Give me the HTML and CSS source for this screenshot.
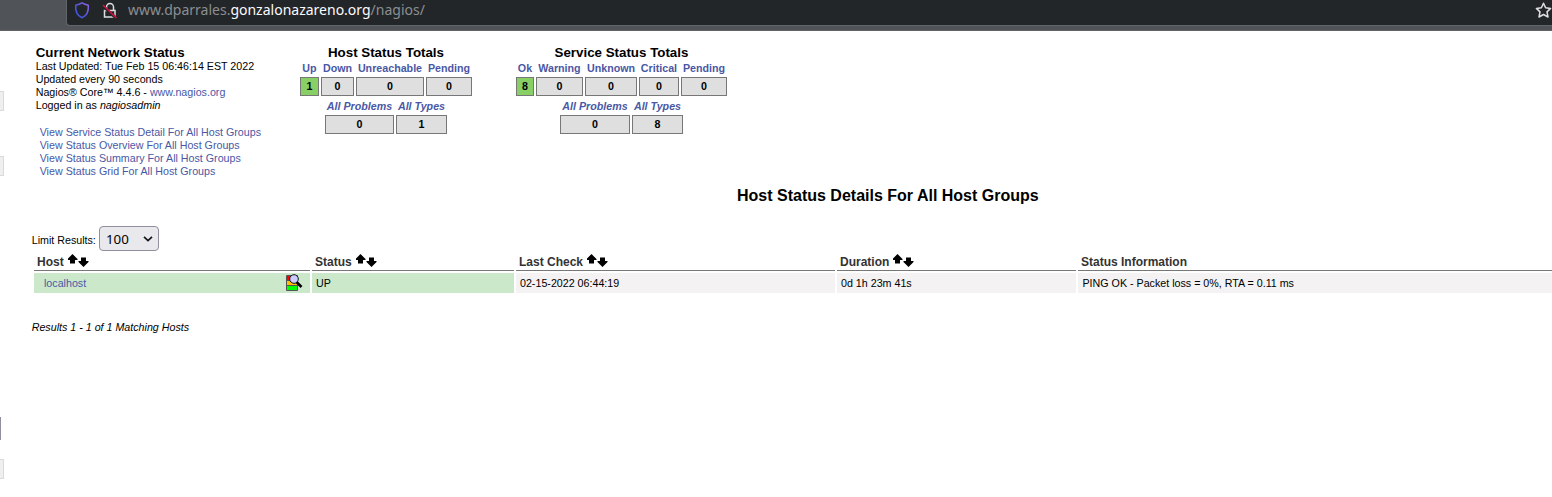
FILE: index.html
```html
<!DOCTYPE html>
<html lang="en">
<head>
<meta charset="utf-8">
<title>Nagios Core</title>
<link rel="stylesheet" href="styles.css">
</head>
<body>
<svg class="defs" width="0" height="0" aria-hidden="true">
  <defs>
    <linearGradient id="shield-stroke" x1="0" y1="1" x2="1" y2="0"><stop offset="0" stop-color="#2f55e0"/><stop offset=".5" stop-color="#5558dc"/><stop offset="1" stop-color="#9565e5"/></linearGradient>
    <symbol id="sort" viewBox="0 0 21 13"><path d="M4.500 0 L9.500 5 V6 H7 V9.500 H2 V6 H-.500 V5 Z M13 3.500 H18 V7 H20.500 V8 L15.500 13 L10.500 8 V7 H13 Z"/></symbol>
  </defs>
</svg>
<header class="toolbar">
  <div class="urlbar">
    <svg class="shield" width="16" height="18" viewBox="0 0 16 18"><path d="M8 1.800 C6 3 3.500 3.800 1.700 4.200 C1.200 10 3 14.500 8 16.800 C13 14.500 14.800 10 14.300 4.200 C12.500 3.800 10 3 8 1.800 Z" fill="none" stroke="url(#shield-stroke)" stroke-width="1.500" stroke-linejoin="round"/></svg>
    <svg class="lock" width="16" height="18" viewBox="0 0 16 18"><path d="M4.500 9 V6 A3.500 3.500 0 0 1 11.500 6 V9 M2.500 9.500 H13 V16 H2.500 Z" fill="none" stroke="#dedee0" stroke-width="1.500"/><path d="M1.500 5.500 L14.500 17.500" stroke="#23262a" stroke-width="3"/><path d="M1 4 L14.500 17" stroke="#d9123f" stroke-width="1.500"/></svg>
    <span class="url">www.dparrales.<b>gonzalonazareno.org</b>/nagios/</span>
    <svg class="star" width="17" height="17" viewBox="0 0 17 17"><path d="M8.500 1.200 L10.600 5.800 L15.600 6.400 L12 9.900 L13 15 L8.500 12.500 L4 15 L5 9.900 L1.400 6.400 L6.400 5.800 Z" fill="none" stroke="#dfdfe1" stroke-width="1.500" stroke-linejoin="round"/></svg>
  </div>
</header>
<div class="page">
  <aside class="rail"><i class="stub s1"></i><i class="stub s2"></i><i class="field"></i><i class="stub s3"></i></aside>
  <main>
    <div class="summary">
      <section class="info">
        <h2>Current Network Status</h2>
        <p>Last Updated: Tue Feb 15 06:46:14 EST 2022</p>
        <p>Updated every 90 seconds</p>
        <p>Nagios® Core™ 4.4.6 - <a>www.nagios.org</a></p>
        <p>Logged in as <em>nagiosadmin</em></p>
        <nav>
          <a>View Service Status Detail For All Host Groups</a>
          <a>View Status Overview For All Host Groups</a>
          <a>View Status Summary For All Host Groups</a>
          <a>View Status Grid For All Host Groups</a>
        </nav>
      </section>
      <section class="totals hosts">
        <h2>Host Status Totals</h2>
        <div class="counts">
          <span>Up</span><span>Down</span><span>Unreachable</span><span>Pending</span>
          <b class="ok">1</b><b>0</b><b>0</b><b>0</b>
        </div>
        <div class="counts all">
          <span>All Problems</span><span>All Types</span>
          <b>0</b><b>1</b>
        </div>
      </section>
      <section class="totals services">
        <h2>Service Status Totals</h2>
        <div class="counts">
          <span>Ok</span><span>Warning</span><span>Unknown</span><span>Critical</span><span>Pending</span>
          <b class="ok">8</b><b>0</b><b>0</b><b>0</b><b>0</b>
        </div>
        <div class="counts all">
          <span>All Problems</span><span>All Types</span>
          <b>0</b><b>8</b>
        </div>
      </section>
    </div>
    <h1>Host Status Details For All Host Groups</h1>
    <div class="limit"><span>Limit Results:</span>
      <div class="select"><span>100</span><svg width="10" height="6" viewBox="0 0 10 6"><path d="M1 .8 L5 4.600 L9 .8" fill="none" stroke="#15141a" stroke-width="1.700"/></svg></div>
    </div>
    <div class="grid heads">
      <div>Host<svg class="sort"><use href="#sort"/></svg></div>
      <div>Status<svg class="sort"><use href="#sort"/></svg></div>
      <div>Last Check<svg class="sort"><use href="#sort"/></svg></div>
      <div>Duration<svg class="sort"><use href="#sort"/></svg></div>
      <div>Status Information</div>
    </div>
    <div class="grid row">
      <div class="up host"><a>localhost</a>
        <svg width="17" height="17" viewBox="0 0 17 17"><path d="M.5 1.500 H11.500 V16.500 H.5 Z" fill="#ffc000" stroke="#555"/><path d="M1 2 H5 V6 H1 Z" fill="#f00"/><path d="M1 12 H11 V16 H1 Z" fill="#0f0"/><path d="M1 6.500 H5 M1 11.500 H11" stroke="#555"/><path d="M10.500 8 L15.500 13" stroke="#000" stroke-width="2.600"/><circle cx="8" cy="5" r="4.300" fill="#ccf" stroke="#111"/></svg>
      </div>
      <div class="up">UP</div>
      <div>02-15-2022 06:44:19</div>
      <div>0d 1h 23m 41s</div>
      <div class="output">PING OK - Packet loss = 0%, RTA = 0.11 ms</div>
    </div>
    <p class="results">Results 1 - 1 of 1 Matching Hosts</p>
  </main>
</div>
</body>
</html>
```
FILE: styles.css
```css
* { box-sizing: border-box; }
body { margin: 0; height: 497px; overflow: hidden; background: #fff; color: #000; font: 10.7px/13px "Liberation Sans", Arial, sans-serif; }
h1, h2, p { margin: 0; }
a { color: #4958a5; }
.defs { display: block; height: 0; }
.toolbar { height: 31px; padding-left: 66px; background: #505357; border-bottom: 1px solid #606367; }
.urlbar { display: flex; align-items: flex-start; height: 26px; padding-left: 7px; background: #232629; border: solid #62656a; border-width: 0 0 1px 1px; border-radius: 0 0 0 4px; }
.shield { margin-top: 1px; }
.lock { margin: 1px 0 0 12px; }
.url { margin: 0 auto 0 10px; font: 14px/20px "Noto Sans", sans-serif; color: #8b8e91; white-space: nowrap; }
.url b { font-weight: 400; color: #fbfbfe; }
.star { margin: 2px 0 0; flex: none; }
.page { display: flex; height: 466px; }
.rail { width: 4px; flex: none; display: flex; flex-direction: column; }
.stub { height: 20px; background: #efefef; border: 1px solid #dadada; border-left: 0; }
.s1 { margin-top: 60px; }
.s2 { margin-top: 45px; }
.field { width: 1px; height: 23px; margin-top: 241px; background: #8f8f9d; }
.s3 { margin-top: 19px; }
main { flex: 1; min-width: 0; padding: 14px 0 0 27.7px; }
.summary { display: flex; height: 135px; }
h2 { font-size: 13.333px; line-height: 15px; }
.info { width: 268.3px; padding-left: 4px; white-space: nowrap; }
nav { display: flex; flex-direction: column; padding: 14px 0 0 4px; }
.totals { text-align: center; }
.hosts { width: 172px; margin-right: 44px; }
.services { width: 211px; }
.counts { display: grid; grid-template-rows: 17px 19px; column-gap: 2px; justify-content: center; font-weight: 700; }
.hosts .counts { grid-template-columns: 19px 33px 68px 46px; }
.services .counts { grid-template-columns: 18px 47px 52px 40px 46px; }
.hosts .all, .services .all { grid-template-rows: 19px 19px; grid-template-columns: 69px 51px; }
.services .all { grid-template-columns: 70px 51px; }
.counts span { color: #4958a5; line-height: 17px; white-space: nowrap; display: flex; justify-content: center; }
.all span { font-style: italic; line-height: 20px; }
.counts b { border: 1px solid #777; background: #dfdfdf; line-height: 17px; }
.counts .ok { background: #88d066; }
h1 { padding-left: 192px; text-align: center; font-size: 16px; line-height: 18px; margin: 7px 0 0; }
.limit { display: flex; align-items: flex-start; height: 26px; margin-top: 20px; }
.limit > span { padding-top: 9px; width: 67.3px; }
.select { display: flex; align-items: center; justify-content: space-between; width: 60px; height: 25px; margin-top: 1px; padding: 0 5px 0 6px; border: 1px solid #8f8f9d; border-radius: 4px; background: #e9e9ed; font: 13.333px/20px "Noto Sans", sans-serif; }
.grid { display: grid; grid-template-columns: 276px 202px 319px 239px 1fr; column-gap: 2px; margin-left: 2.3px; }
.heads { height: 20px; grid-template-rows: 20px; font-size: 12px; font-weight: 700; color: #333; }
.heads div { display: flex; padding-left: 3px; line-height: 22px; border-bottom: 1px solid #777; white-space: nowrap; }
.sort { width: 21px; height: 13px; margin: 3px 0 0 4px; fill: #000; overflow: visible; }
.row { margin-top: 2px; height: 20px; grid-template-rows: 20px; }
.row div { display: flex; background: #f4f2f2; padding-left: 4px; line-height: 21px; }
.row .up { background: #cbe8cb; }
.row .host { justify-content: space-between; padding: 0 7px 0 10px; }
.row .output { padding-left: 4.500px; }
.host svg { margin-top: 1px; }
.results { margin-top: 28px; font-style: italic; }
```
